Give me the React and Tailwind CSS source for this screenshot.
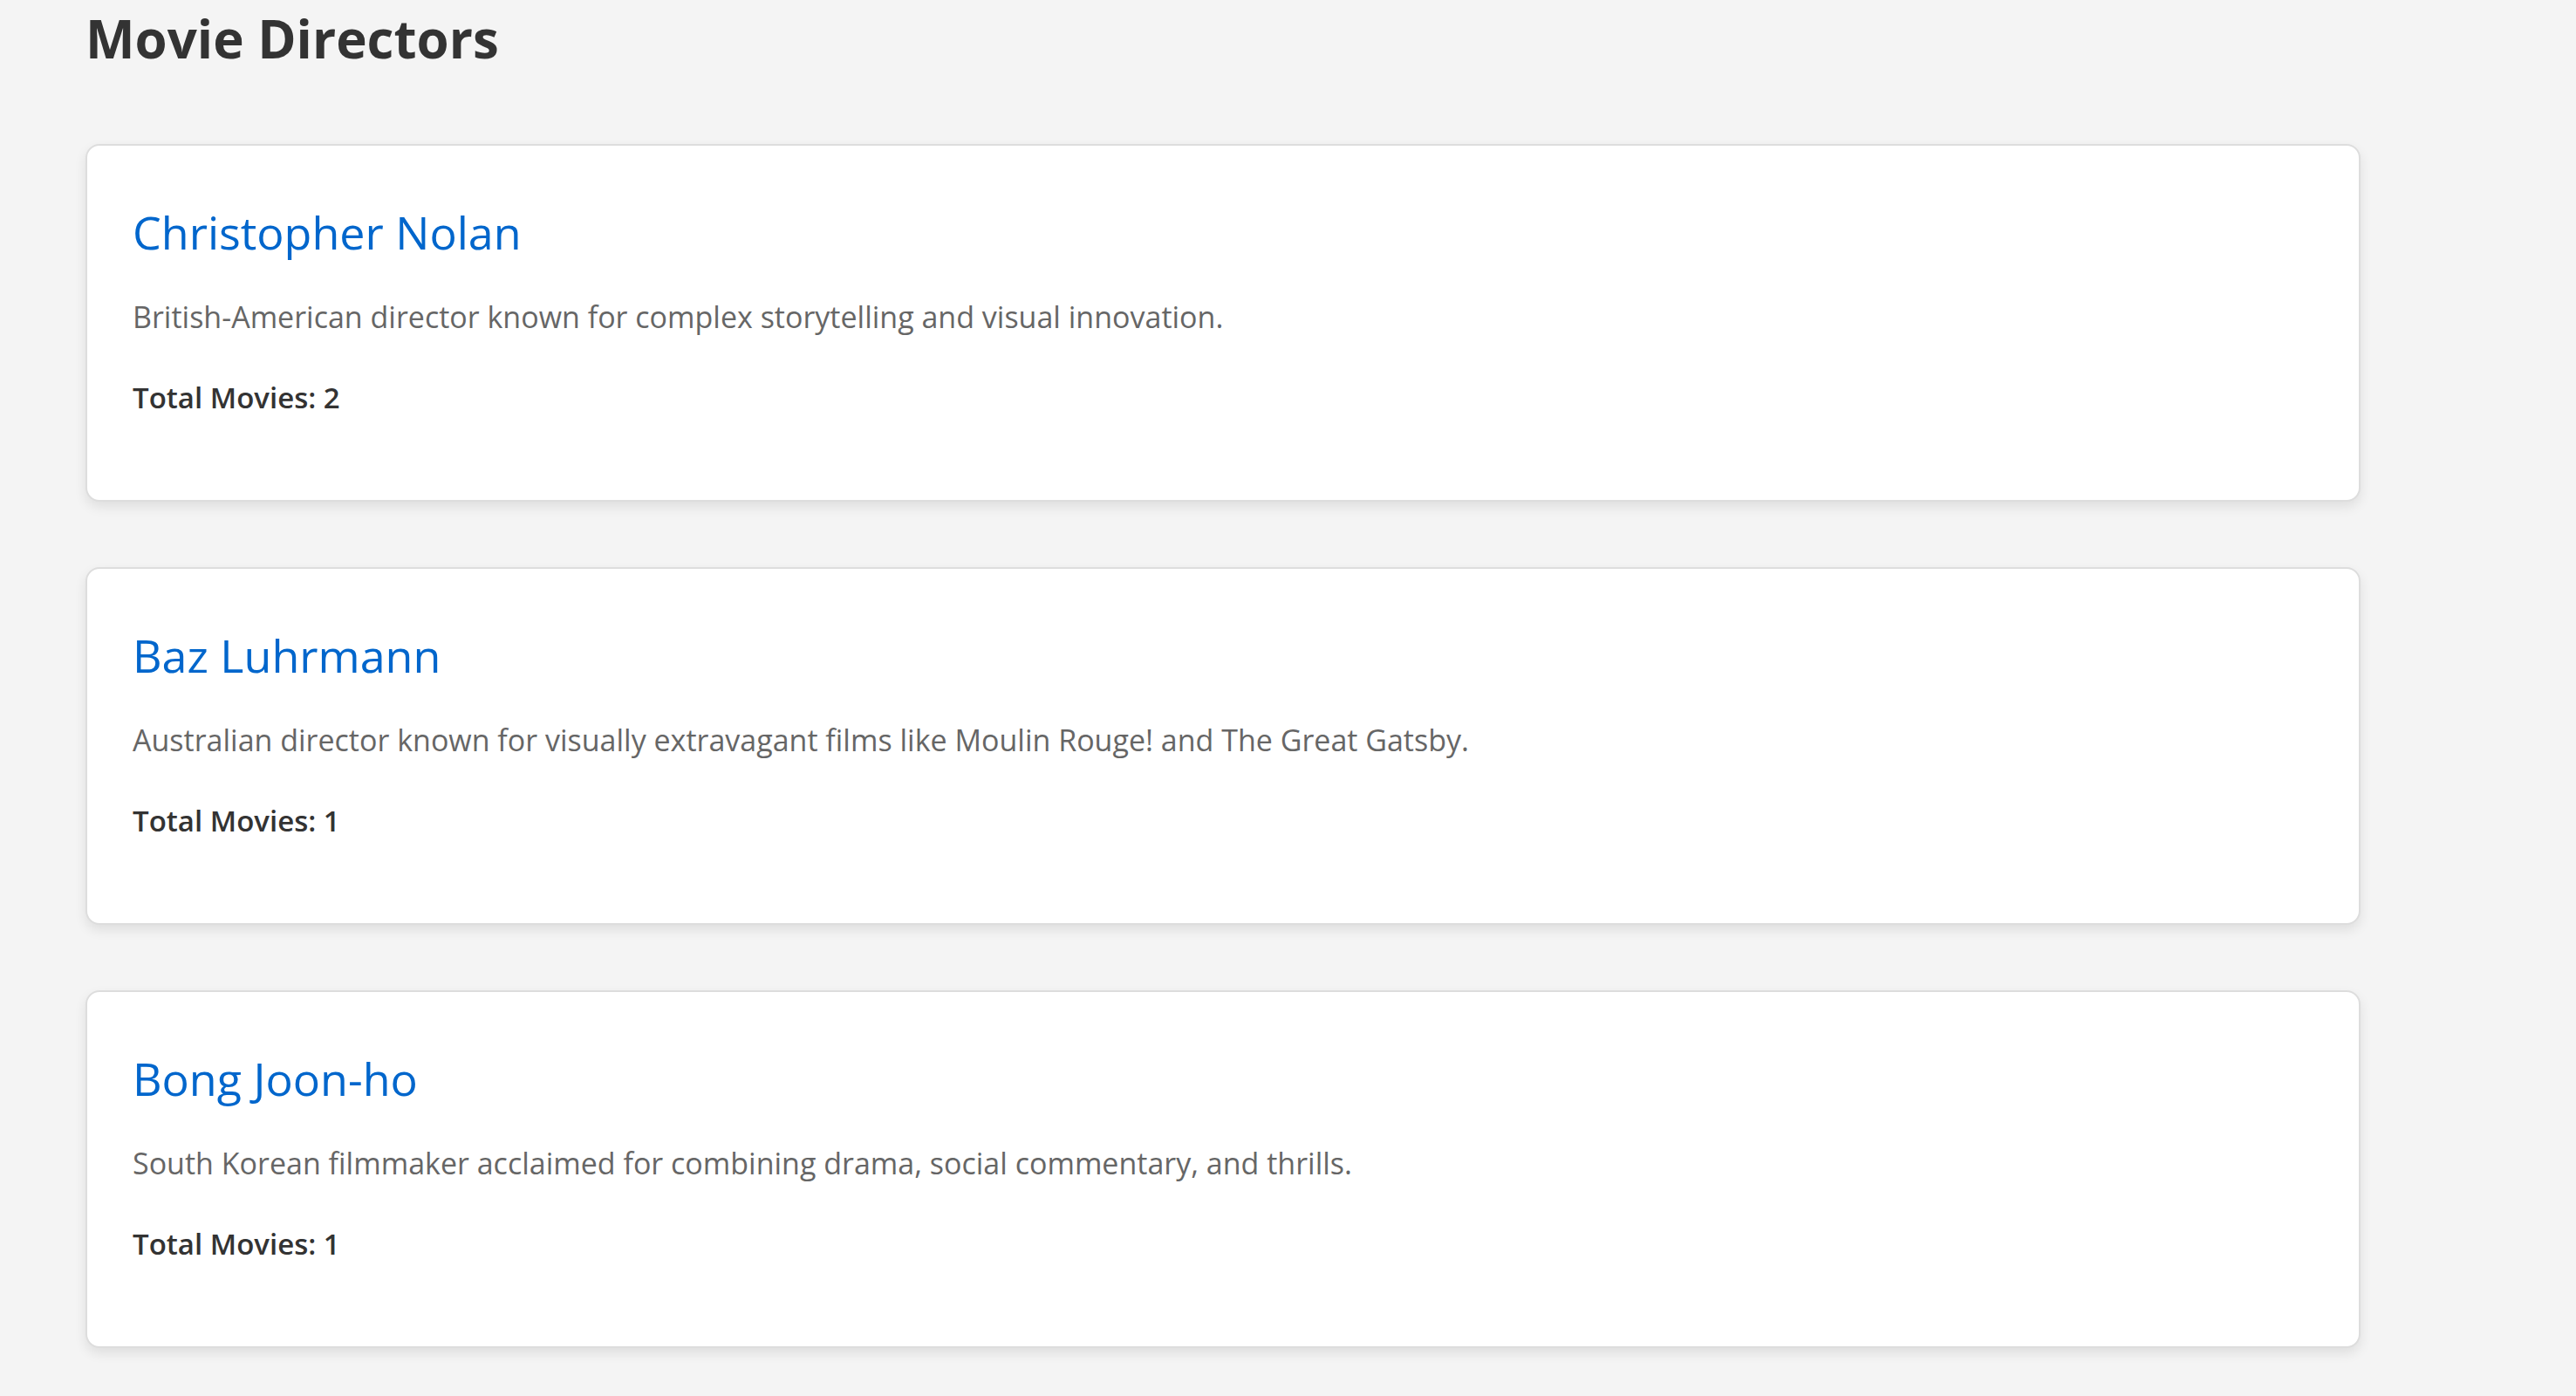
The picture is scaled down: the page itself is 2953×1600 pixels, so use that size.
export default function App() {
  const directors = [
    {
      name: "Christopher Nolan",
      desc: "British-American director known for complex storytelling and visual innovation.",
      total: 2,
    },
    {
      name: "Baz Luhrmann",
      desc: "Australian director known for visually extravagant films like Moulin Rouge! and The Great Gatsby.",
      total: 1,
    },
    {
      name: "Bong Joon-ho",
      desc: "South Korean filmmaker acclaimed for combining drama, social commentary, and thrills.",
      total: 1,
    },
  ];
  return (
    <div className="min-h-screen bg-[#f4f4f4] px-[98px] pt-[8px] pb-[56px] font-['Open_Sans',sans-serif]">
      <h1 className="text-[60px] leading-[72px] font-bold text-[#333]">Movie Directors</h1>
      <div className="mt-[85px] flex w-[2608px] flex-col gap-[75px]">
        {directors.map((d) => (
          <div
            key={d.name}
            className="box-border h-[410px] rounded-[16px] border-2 border-[#dddddd] bg-white px-[52px] pt-[68px] shadow-[0_6px_14px_rgba(0,0,0,0.09)]"
          >
            <h2 className="text-[52px] leading-[62px] font-normal text-[#0066cc]">{d.name}</h2>
            <p className="mt-[43px] text-[34px] leading-[46px] text-[#666]">{d.desc}</p>
            <p className="mt-[47px] text-[33px] leading-[46px] font-semibold text-[#333]">
              Total Movies: {d.total}
            </p>
          </div>
        ))}
      </div>
    </div>
  );
}
